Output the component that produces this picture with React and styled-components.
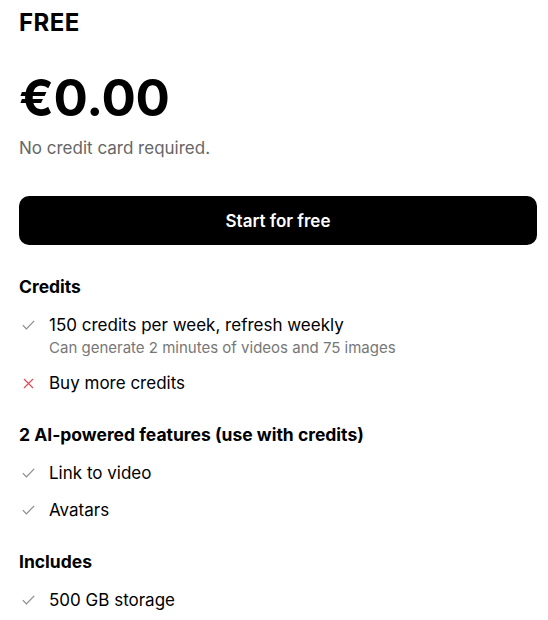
import React from 'react';
import styled, { createGlobalStyle } from 'styled-components';

const GlobalStyle = createGlobalStyle`
  body {
    margin: 0;
    background: #fff;
    font-family: Inter, "Noto Sans", sans-serif;
    color: #000;
  }
`;

const Card = styled.div`
  width: 518px;
  padding: 8px 11px 0 19px;
`;

const PlanName = styled.h2`
  margin: 0;
  font-size: 24px;
  line-height: 30px;
  font-weight: 700;
  letter-spacing: 0.4px;
`;

const Price = styled.div`
  margin-top: 28px;
  font-size: 51px;
  line-height: 64px;
  font-weight: 700;
  letter-spacing: -0.3px;
`;

const Note = styled.p`
  margin: 6px 0 0;
  font-size: 17px;
  line-height: 24px;
  color: #666;
`;

const StartButton = styled.button`
  display: block;
  width: 100%;
  height: 49px;
  margin-top: 36px;
  border: none;
  border-radius: 10px;
  background: #000;
  color: #fff;
  font-family: inherit;
  font-size: 17px;
  font-weight: 600;
  cursor: pointer;
`;

const Section = styled.section`
  margin-top: ${p => p.$first ? 30 : 28}px;
`;

const SectionTitle = styled.h3`
  margin: 0;
  font-size: 17.5px;
  line-height: 24px;
  font-weight: 700;
`;

const List = styled.ul`
  list-style: none;
  margin: 14px 0 0;
  padding: 0;
  display: flex;
  flex-direction: column;
  gap: 13px;
`;

const Item = styled.li`
  display: grid;
  grid-template-columns: 30px 1fr;
  align-items: start;
`;

const IconBox = styled.span`
  height: 24px;
  display: flex;
  align-items: center;
  padding-left: 3px;
`;

const Label = styled.div`
  font-size: 17px;
  line-height: 24px;
`;

const SubLabel = styled.div`
  font-size: 15px;
  line-height: 21px;
  color: #777;
`;

const Check = () => (
  <svg width="13" height="10" viewBox="0 0 13 10" fill="none">
    <path d="M0.8 5.2 L4.4 8.8 L12.2 0.8" stroke="#8a8a8a" strokeWidth="1.2" />
  </svg>
);

const Cross = () => (
  <svg width="11" height="11" viewBox="0 0 11 11" fill="none" style={{ marginLeft: 1 }}>
    <path d="M1 1 L10 10 M10 1 L1 10" stroke="#e0505a" strokeWidth="1.3" />
  </svg>
);

const sections = [
  {
    title: 'Credits',
    items: [
      { ok: true, text: '150 credits per week, refresh weekly', sub: 'Can generate 2 minutes of videos and 75 images' },
      { ok: false, text: 'Buy more credits' },
    ],
  },
  {
    title: '2 AI-powered features (use with credits)',
    items: [
      { ok: true, text: 'Link to video' },
      { ok: true, text: 'Avatars' },
    ],
  },
  {
    title: 'Includes',
    items: [{ ok: true, text: '500 GB storage' }],
  },
];

export default function App() {
  return (
    <>
      <GlobalStyle />
      <Card>
        <PlanName>FREE</PlanName>
        <Price>€0.00</Price>
        <Note>No credit card required.</Note>
        <StartButton>Start for free</StartButton>
        {sections.map((s, i) => (
          <Section key={s.title} $first={i === 0}>
            <SectionTitle>{s.title}</SectionTitle>
            <List>
              {s.items.map(it => (
                <Item key={it.text}>
                  <IconBox>{it.ok ? <Check /> : <Cross />}</IconBox>
                  <div>
                    <Label>{it.text}</Label>
                    {it.sub && <SubLabel>{it.sub}</SubLabel>}
                  </div>
                </Item>
              ))}
            </List>
          </Section>
        ))}
      </Card>
    </>
  );
}
